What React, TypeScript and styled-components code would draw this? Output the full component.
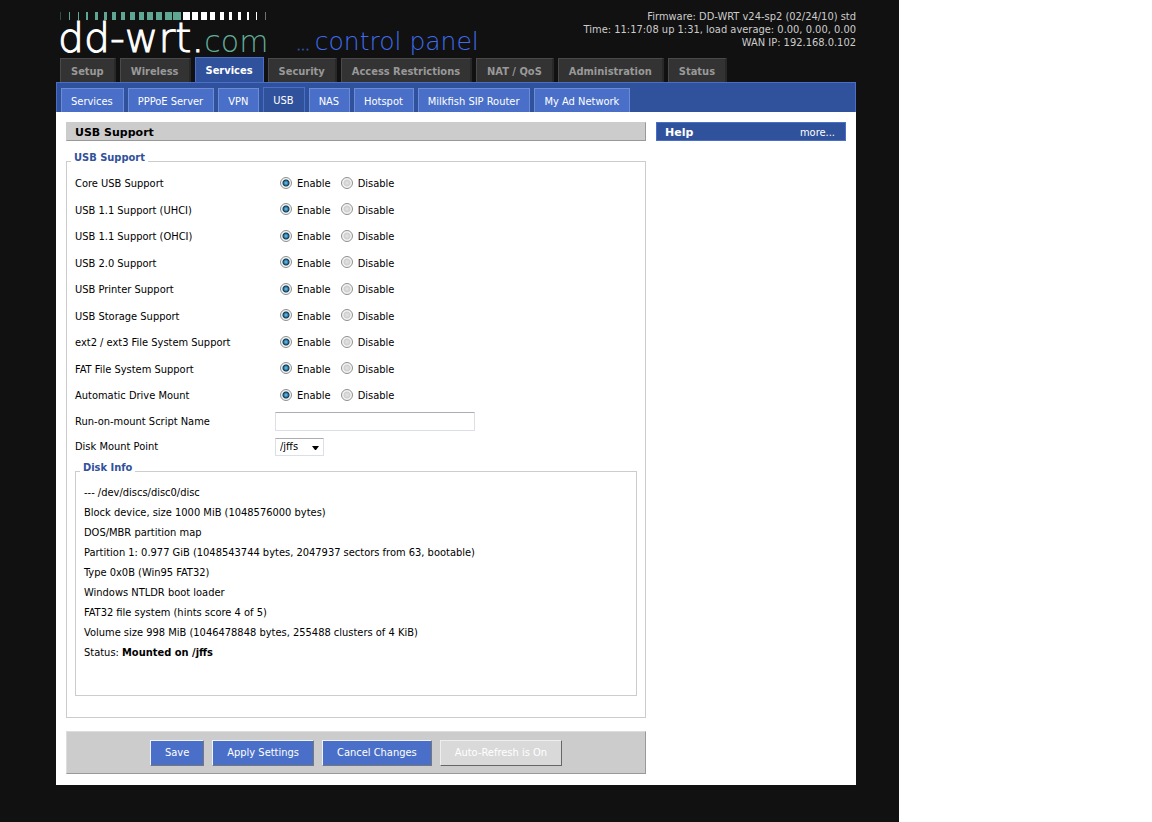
import React, { useState } from "react";
import styled, { createGlobalStyle } from "styled-components";

const GlobalStyle = createGlobalStyle`
  * { box-sizing: border-box; }
  body {
    margin: 0;
    background: #fff;
    color: #000;
    font: 11px/14px "DejaVu Sans Condensed", Tahoma, "DejaVu Sans", sans-serif;
  }
  button, input, select { font: inherit; }
`;

const Backdrop = styled.div`
  width: 78%;
  min-width: 899px;
  min-height: 100vh;
  padding: 0 43px 37px 56px;
  background: #111;
`;

const Header = styled.header`
  display: flex;
  justify-content: space-between;
  height: 57px;
`;

const Brand = styled.div`
  display: flex;
  align-items: flex-end;
  gap: 28px;
`;

const Logo = styled.a`
  display: flex;
  flex-direction: column;
  padding-left: 2px;
  text-decoration: none;
`;

const Meter = styled.svg`
  display: block;
  width: 208px;
  height: 8px;
  margin-left: 2px;
`;

const Wordmark = styled.span`
  display: flex;
  align-items: baseline;
  height: 37px;
  font-family: "DejaVu Sans Light", "DejaVu Sans", sans-serif;
  font-weight: 200;
  line-height: 37px;
  white-space: nowrap;
`;

const WordmarkName = styled.span`
  color: #fff;
  font-size: 41px;
  -webkit-text-stroke: 1px #fff;
`;

const WordmarkDomain = styled.span`
  color: #62ad99;
  font-size: 30px;
`;

const Tagline = styled.span`
  display: flex;
  align-items: baseline;
  gap: 5px;
  color: #3f6cf0;
  font-family: "DejaVu Sans Light", "DejaVu Sans", sans-serif;
  font-size: 25px;
  font-weight: 200;
  line-height: 24px;
  white-space: nowrap;
`;

const TaglineDots = styled.span`
  font-size: 14px;
  -webkit-text-stroke: 1px #30519c;
`;

const SystemInfo = styled.div`
  padding-top: 10px;
  color: #ccc;
  line-height: 13px;
  text-align: right;
`;

const Tabs = styled.nav`
  display: flex;
  align-items: flex-end;
  gap: 4px;
  padding-left: 4px;
`;

const Tab = styled.a<{ $active?: boolean }>`
  height: ${(p) => (p.$active ? 25 : 24)}px;
  padding: 0 10px;
  border: 1px solid ${(p) => (p.$active ? "#4a6fc8" : "#4a4a4a")};
  border-right: ${(p) => (p.$active ? "1px solid #4a6fc8" : "2px solid #282828")};
  border-bottom: 0;
  background: ${(p) => (p.$active ? "#30519c" : "#333")};
  color: ${(p) => (p.$active ? "#fff" : "#999")};
  font-weight: bold;
  line-height: 25px;
  text-decoration: none;
  white-space: nowrap;
`;

const SubTabs = styled.nav`
  display: flex;
  align-items: flex-end;
  gap: 4px;
  height: 30px;
  padding-left: 4px;
  border: 1px solid #4a6fc8;
  border-bottom: 0;
  background: #30519c;
`;

const SubTab = styled.a<{ $active?: boolean }>`
  height: ${(p) => (p.$active ? 25 : 24)}px;
  padding: 0 10px 0 9px;
  border: 1px solid ${(p) => (p.$active ? "#4a6fc8" : "#6e8cd4")};
  border-bottom: 0;
  background: ${(p) => (p.$active ? "#30519c" : "#4a6fc8")};
  color: #fff;
  line-height: 25px;
  text-decoration: none;
  white-space: nowrap;
`;

const Panel = styled.div`
  display: flex;
  align-items: flex-start;
  gap: 10px;
  padding: 10px 10px 11px;
  background: #fff;
`;

const Main = styled.form`
  flex: 1;
  min-width: 0;
`;

const Title = styled.h2`
  height: 19px;
  margin: 0;
  padding: 0 8px;
  border: 1px solid #ccc;
  border-right-color: #999;
  border-bottom-color: #999;
  background: #ccc;
  font: bold 11px/19px "DejaVu Sans", Verdana, sans-serif;
`;

const Help = styled.aside`
  display: flex;
  justify-content: space-between;
  width: 190px;
  height: 19px;
  padding: 0 10px 0 8px;
  border: 1px solid #4a6fc8;
  background: #30519c;
  color: #fff;
  line-height: 19px;
`;

const HelpTitle = styled.h2`
  margin: 0;
  font: bold 11px/19px "DejaVu Sans", Verdana, sans-serif;
`;

const HelpLink = styled.a`
  color: #fff;
  text-decoration: none;
`;

const Group = styled.fieldset`
  min-width: 0;
  margin: 10px 0 0;
  padding: 0 8px 21px;
  border: 1px solid #ccc;
`;

const InnerGroup = styled(Group)`
  margin: 2px 0 0;
  padding: 2px 8px 32px;
`;

const Legend = styled.legend`
  margin-left: -4px;
  padding: 0 3px 6px;
  color: #30519c;
  font-weight: bold;
`;

const Row = styled.div`
  display: flex;
  align-items: center;
  height: 26px;
  &:nth-of-type(even) { height: 27px; }
`;

const RowLabel = styled.label`
  width: 200px;
`;

const Choices = styled.div`
  display: flex;
  gap: 10px;
  padding: 0 5px;
`;

const Choice = styled.label`
  display: flex;
  align-items: center;
  gap: 5px;
`;

const Radio = styled.input`
  appearance: none;
  width: 12px;
  height: 12px;
  margin: 0 0 3px;
  border: 1px solid #8e8f8f;
  border-radius: 50%;
  background: radial-gradient(circle at 5px 5px, #e4e4e4 0, #cfcfcf 3px, #f4f4f4 4px);
  &:checked {
    background: radial-gradient(circle at 5px 5px, #7cc8e8 0, #2a7ba8 2px, #12374f 3px, #f4f4f4 4px);
  }
`;

const FieldRow = styled(Row)`
  && { height: 25px; }
`;

const TextBox = styled.input`
  width: 200px;
  height: 19px;
  padding: 0 4px;
  border: 1px solid #dbdfe6;
  border-top-color: #abadb3;
  border-radius: 1px;
`;

const SelectBox = styled.span`
  display: grid;
  align-items: center;
  & > * { grid-area: 1 / 1; }
`;

const Select = styled.select`
  appearance: none;
  width: 49px;
  height: 18px;
  padding: 0 4px;
  border: 1px solid #dbdfe6;
  border-top-color: #abadb3;
  border-radius: 1px;
  background: #fff;
`;

const Arrow = styled.svg`
  justify-self: end;
  width: 7px;
  height: 4px;
  margin: 2px 5px 0 0;
  pointer-events: none;
`;

const DiskLines = styled.ul`
  margin: 0;
  padding: 0;
  list-style: none;
  line-height: 20px;
`;

const Actions = styled.div`
  display: flex;
  justify-content: center;
  gap: 8px;
  margin-top: 13px;
  padding: 8px 0 7px;
  border: 1px solid #ddd;
  border-right-color: #999;
  border-bottom-color: #999;
  background: #ccc;
`;

const Button = styled.button`
  height: 26px;
  padding: 0 14px;
  border: 1px solid;
  border-color: #eef2fb #777 #777 #eef2fb;
  background: #4a6fc8;
  color: #fff;
  &:disabled {
    border-color: #eee #666 #666 #eee;
    background: #d9d9d9;
    color: #fff;
  }
`;

const tabs = ["Setup", "Wireless", "Services", "Security", "Access Restrictions", "NAT / QoS", "Administration", "Status"];
const subTabs = ["Services", "PPPoE Server", "VPN", "USB", "NAS", "Hotspot", "Milkfish SIP Router", "My Ad Network"];
const settings = [
  "Core USB Support",
  "USB 1.1 Support (UHCI)",
  "USB 1.1 Support (OHCI)",
  "USB 2.0 Support",
  "USB Printer Support",
  "USB Storage Support",
  "ext2 / ext3 File System Support",
  "FAT File System Support",
  "Automatic Drive Mount",
];
const diskInfo = [
  "--- /dev/discs/disc0/disc",
  "Block device, size 1000 MiB (1048576000 bytes)",
  "DOS/MBR partition map",
  "Partition 1: 0.977 GiB (1048543744 bytes, 2047937 sectors from 63, bootable)",
  "Type 0x0B (Win95 FAT32)",
  "Windows NTLDR boot loader",
  "FAT32 file system (hints score 4 of 5)",
  "Volume size 998 MiB (1046478848 bytes, 255488 clusters of 4 KiB)",
];

/* [left, width] of each bar: they swell from hairlines, then shrink again. */
const meterBars = [
  [0, 1], [9, 1], [18, 1], [26, 2], [35, 3], [44, 3], [52, 4], [61, 4],
  [70, 5], [79, 5], [87, 6], [96, 6], [105, 7], [113, 8],
  [123, 7], [132, 6], [141, 6], [150, 5], [160, 4], [169, 3], [178, 3], [187, 2], [196, 1], [205, 1],
];

function LogoMeter() {
  return (
    <Meter viewBox="0 0 208 8" aria-hidden="true">
      {meterBars.map(([x, w], i) => (
        <rect
          key={x}
          x={x}
          y="0"
          width={w}
          height="8"
          fill={i < 14 ? "#5fa693" : "#fff"}
          opacity={i === 0 || i === 23 ? 0.4 : 1}
        />
      ))}
    </Meter>
  );
}

function Setting({ name, index }: { name: string; index: number }) {
  const [enabled, setEnabled] = useState(true);
  const group = `setting-${index}`;
  return (
    <Row role="radiogroup" aria-labelledby={group}>
      <RowLabel as="span" id={group}>{name}</RowLabel>
      <Choices>
        <Choice>
          <Radio type="radio" name={group} checked={enabled} onChange={() => setEnabled(true)} />
          Enable
        </Choice>
        <Choice>
          <Radio type="radio" name={group} checked={!enabled} onChange={() => setEnabled(false)} />
          Disable
        </Choice>
      </Choices>
    </Row>
  );
}

export default function App() {
  return (
    <Backdrop>
      <GlobalStyle />
      <Header>
        <Brand>
          <Logo href="#">
            <LogoMeter />
            <Wordmark>
              <WordmarkName>dd-wrt.</WordmarkName>
              <WordmarkDomain>com</WordmarkDomain>
            </Wordmark>
          </Logo>
          <Tagline>
            <TaglineDots>...</TaglineDots>
            control panel
          </Tagline>
        </Brand>
        <SystemInfo>
          <div>Firmware: DD-WRT v24-sp2 (02/24/10) std</div>
          <div>Time: 11:17:08 up 1:31, load average: 0.00, 0.00, 0.00</div>
          <div>WAN IP: 192.168.0.102</div>
        </SystemInfo>
      </Header>
      <Tabs>
        {tabs.map((t) => (
          <Tab key={t} href="#" $active={t === "Services"}>{t}</Tab>
        ))}
      </Tabs>
      <SubTabs>
        {subTabs.map((t) => (
          <SubTab key={t} href="#" $active={t === "USB"}>{t}</SubTab>
        ))}
      </SubTabs>
      <Panel>
        <Main onSubmit={(e) => e.preventDefault()}>
          <Title>USB Support</Title>
          <Group>
            <Legend>USB Support</Legend>
            {settings.map((s, i) => (
              <Setting key={s} name={s} index={i} />
            ))}
            <FieldRow>
              <RowLabel htmlFor="script">Run-on-mount Script Name</RowLabel>
              <TextBox id="script" type="text" />
            </FieldRow>
            <FieldRow>
              <RowLabel htmlFor="mount">Disk Mount Point</RowLabel>
              <SelectBox>
                <Select id="mount" defaultValue="/jffs">
                  <option>/jffs</option>
                  <option>/mnt</option>
                  <option>/opt</option>
                </Select>
                <Arrow viewBox="0 0 7 4" aria-hidden="true">
                  <path d="M0 0h7l-3 4h-1z" fill="#000" />
                </Arrow>
              </SelectBox>
            </FieldRow>
            <InnerGroup>
              <Legend>Disk Info</Legend>
              <DiskLines>
                {diskInfo.map((line) => (
                  <li key={line}>{line}</li>
                ))}
                <li>Status: <b>Mounted on /jffs</b></li>
              </DiskLines>
            </InnerGroup>
          </Group>
          <Actions>
            <Button type="submit">Save</Button>
            <Button type="button">Apply Settings</Button>
            <Button type="button">Cancel Changes</Button>
            <Button type="button" disabled>Auto-Refresh is On</Button>
          </Actions>
        </Main>
        <Help>
          <HelpTitle>Help</HelpTitle>
          <HelpLink href="#">more...</HelpLink>
        </Help>
      </Panel>
    </Backdrop>
  );
}
